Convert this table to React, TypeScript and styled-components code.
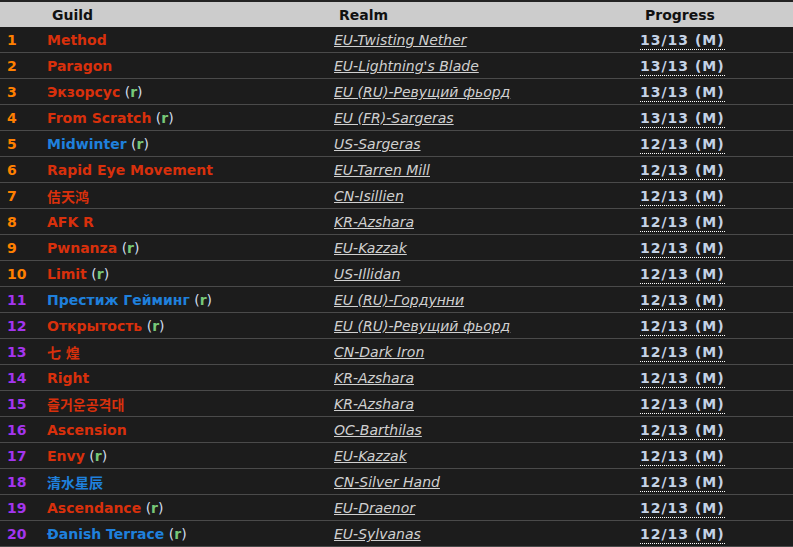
import styled, { createGlobalStyle } from "styled-components";

const GlobalStyle = createGlobalStyle`
  html, body {
    margin: 0;
    padding: 0;
    background: #1c1c1c;
  }
  body {
    font-family: "DejaVu Sans", Verdana, "Noto Sans CJK SC", "Noto Sans CJK KR", sans-serif;
    font-size: 14px;
  }
`;

type Rank = "legendary" | "epic";
type Faction = "red" | "blue";

interface Entry {
  name: string;
  color: Faction;
  recruiting?: boolean;
  realm: string;
  progress: string;
}

const entries: Entry[] = [
  { name: "Method", color: "red", realm: "EU-Twisting Nether", progress: "13/13 (M)" },
  { name: "Paragon", color: "red", realm: "EU-Lightning's Blade", progress: "13/13 (M)" },
  { name: "Экзорсус", color: "red", recruiting: true, realm: "EU (RU)-Ревущий фьорд", progress: "13/13 (M)" },
  { name: "From Scratch", color: "red", recruiting: true, realm: "EU (FR)-Sargeras", progress: "13/13 (M)" },
  { name: "Midwinter", color: "blue", recruiting: true, realm: "US-Sargeras", progress: "12/13 (M)" },
  { name: "Rapid Eye Movement", color: "red", realm: "EU-Tarren Mill", progress: "12/13 (M)" },
  { name: "佶天鸿", color: "red", realm: "CN-Isillien", progress: "12/13 (M)" },
  { name: "AFK R", color: "red", realm: "KR-Azshara", progress: "12/13 (M)" },
  { name: "Pwnanza", color: "red", recruiting: true, realm: "EU-Kazzak", progress: "12/13 (M)" },
  { name: "Limit", color: "red", recruiting: true, realm: "US-Illidan", progress: "12/13 (M)" },
  { name: "Престиж Гейминг", color: "blue", recruiting: true, realm: "EU (RU)-Гордунни", progress: "12/13 (M)" },
  { name: "Открытость", color: "red", recruiting: true, realm: "EU (RU)-Ревущий фьорд", progress: "12/13 (M)" },
  { name: "七 煌", color: "red", realm: "CN-Dark Iron", progress: "12/13 (M)" },
  { name: "Right", color: "red", realm: "KR-Azshara", progress: "12/13 (M)" },
  { name: "즐거운공격대", color: "red", realm: "KR-Azshara", progress: "12/13 (M)" },
  { name: "Ascension", color: "red", realm: "OC-Barthilas", progress: "12/13 (M)" },
  { name: "Envy", color: "red", recruiting: true, realm: "EU-Kazzak", progress: "12/13 (M)" },
  { name: "清水星辰", color: "blue", realm: "CN-Silver Hand", progress: "12/13 (M)" },
  { name: "Ascendance", color: "red", recruiting: true, realm: "EU-Draenor", progress: "12/13 (M)" },
  { name: "Đanish Terrace", color: "blue", recruiting: true, realm: "EU-Sylvanas", progress: "12/13 (M)" },
];

export default function App() {
  return (
    <>
      <GlobalStyle />
      <Table>
        <HeaderRow>
          <HeaderCell />
          <HeaderCell>Guild</HeaderCell>
          <HeaderCell>Realm</HeaderCell>
          <HeaderCell>Progress</HeaderCell>
        </HeaderRow>
        {entries.map((e, i) => (
          <Row key={i}>
            <RankCell $rank={i < 10 ? "legendary" : "epic"}>{i + 1}</RankCell>
            <GuildCell>
              <GuildName $color={e.color}>{e.name}</GuildName>
              {e.recruiting && (
                <Recruit>
                  {" "}(<b>r</b>)
                </Recruit>
              )}
            </GuildCell>
            <div>
              <RealmLink href="#">{e.realm}</RealmLink>
            </div>
            <div>
              <Progress>{e.progress}</Progress>
            </div>
          </Row>
        ))}
      </Table>
    </>
  );
}

const Table = styled.div`
  width: 793px;
  background: #1c1c1c;
`;

const cols = "47px 287px 306px 1fr";

const HeaderRow = styled.div`
  display: grid;
  grid-template-columns: ${cols};
  height: 25px;
  align-items: center;
  background: #cccccc;
  border-top: 2px solid #222;
`;

const HeaderCell = styled.div`
  padding-left: 5px;
  font-weight: bold;
  color: #111;
`;

const Row = styled.div`
  display: grid;
  grid-template-columns: ${cols};
  align-items: center;
  border-bottom: 1px solid #4a4a4a;
  white-space: nowrap;
  padding-top: 1px;
  box-sizing: border-box;
  height: 26px;
`;

const RankCell = styled.div<{ $rank: Rank }>`
  padding-left: 7px;
  font-weight: bold;
  color: ${(p) => (p.$rank === "legendary" ? "#ff8000" : "#a335ee")};
`;

const GuildCell = styled.div`
  font-weight: bold;
`;

const GuildName = styled.span<{ $color: Faction }>`
  color: ${(p) => (p.$color === "red" ? "#d8300c" : "#1f80dc")};
`;

const Recruit = styled.span`
  font-weight: normal;
  color: #d0dcec;

  b {
    color: #78c878;
    font-weight: bold;
  }
`;

const RealmLink = styled.a`
  color: #d0d0d0;
  font-style: italic;
  text-decoration: underline;
`;

const Progress = styled.span`
  color: #c4d2e6;
  font-weight: bold;
  letter-spacing: 1px;
  border-bottom: 1px dotted #ffffff;
  padding-bottom: 1px;
`;
